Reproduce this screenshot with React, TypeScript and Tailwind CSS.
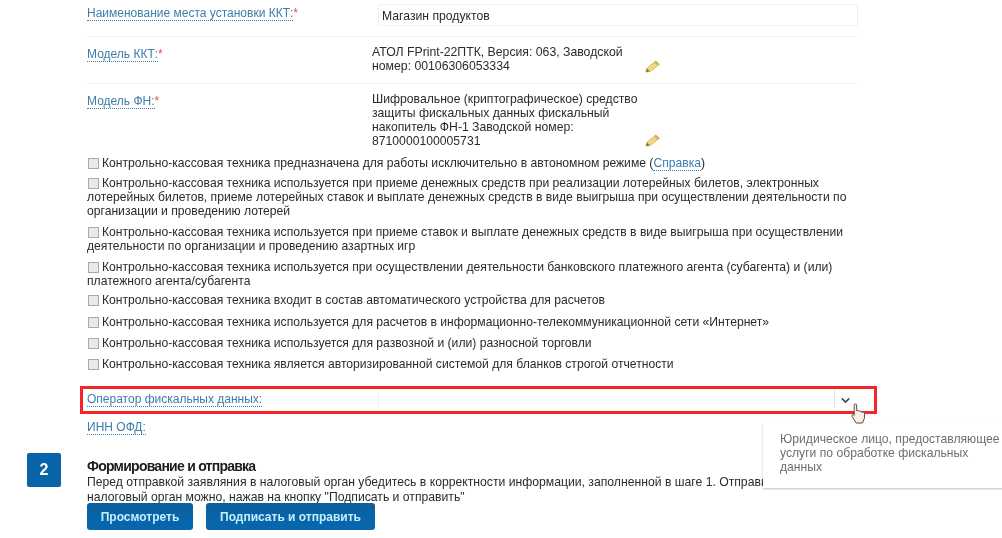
import { ChevronDown } from 'lucide-react';

const checks = [
    { cls: '-mt-px', text: 'Контрольно-кассовая техника используется при приеме денежных средств при реализации лотерейных билетов, электронных лотерейных билетов, приеме лотерейных ставок и выплате денежных средств в виде выигрыша при осуществлении деятельности по организации и проведению лотерей' },
    { cls: '', text: 'Контрольно-кассовая техника используется при приеме ставок и выплате денежных средств в виде выигрыша при осуществлении деятельности по организации и проведению азартных игр' },
    { cls: '', text: 'Контрольно-кассовая техника используется при осуществлении деятельности банковского платежного агента (субагента) и (или) платежного агента/субагента' },
    { cls: '-mt-[2px]', text: 'Контрольно-кассовая техника входит в состав автоматического устройства для расчетов' },
    { cls: 'mt-px', text: 'Контрольно-кассовая техника используется для расчетов в информационно-телекоммуникационной сети «Интернет»' },
    { cls: '', text: 'Контрольно-кассовая техника используется для развозной и (или) разносной торговли' },
    { cls: '', text: 'Контрольно-кассовая техника является авторизированной системой для бланков строгой отчетности' },
];

function Pencil() {
    return (
        <svg width="15" height="13" viewBox="0 0 16 14" className="shrink-0">
            <path d="M1 13 L2 9 L11.5 1 L15.5 4.5 L5.5 12.5 Z" fill="#f2d67c" stroke="#c9ad5a" strokeWidth="0.8" />
            <path d="M1 13 L2 9.5 L5 12 Z" fill="#7a6a45" />
            <path d="M11.5 1 L15.5 4.5 L13.5 6 L9.8 2.6 Z" fill="#dba85a" />
        </svg>
    );
}

function HandCursor() {
    return (
        <svg width="15" height="21" viewBox="0 0 15 21" className="absolute left-[851px] top-[403px]">
            <path
                d="M3.2 2 C3.2 0.6 5.6 0.6 5.6 2 L5.8 8 C6.6 7.2 8 7.4 8.3 8.4 C9.2 7.8 10.4 8.2 10.6 9.2 C11.6 8.8 13.4 9.2 13.6 10.6 L13.4 15.4 L11.4 20 L5.2 20 L1 13.4 C0.4 12.2 1.6 11 3.2 12.2 Z"
                fill="#fbeee4"
                stroke="#5a4a42"
                strokeWidth="1"
                strokeLinejoin="round"
            />
        </svg>
    );
}

function FieldLabel({ text, required }: { text: string; required?: boolean }) {
    return (
        <div className="w-[285px] shrink-0 text-[#3f7dab]">
            <span className="border-b border-dotted border-[#3f7dab]">{text}:</span>
            {required && <span className="text-[#d9534f]">*</span>}
        </div>
    );
}

function Check({ children, className }: { children: React.ReactNode; className?: string }) {
    return (
        <div className={`pr-[145px] text-[12.15px] leading-[14px] text-[#2b2b2b] ${className ?? ''}`}>
            <span className="ml-px mr-[3px] inline-block h-[11px] w-[11px] translate-y-[2px] border border-[#a9a9a9] bg-[#e9e9e9]" />
            {children}
        </div>
    );
}

export default function App() {
    return (
        <div className="relative h-[538px] w-[1002px] overflow-hidden bg-white font-['Liberation_Sans',Arial,sans-serif] text-[12px] text-[#2b2b2b] blur-[0.4px]">
            <div className="pl-[87px]">
                <div className="flex h-[37px] w-[771px] items-start border-b border-[#f4f4f4] pt-[4px]">
                    <FieldLabel text="Наименование места установки ККТ" required />
                    <div className="ml-[6px] flex h-[22px] flex-1 items-center rounded-[2px] border border-[#f0f0f0] pl-[3px] pt-[2px] text-[12.2px]">Магазин продуктов</div>
                </div>

                <div className="flex h-[47px] w-[771px] items-start border-b border-[#f4f4f4] pt-[8px]">
                    <FieldLabel text="Модель ККТ" required />
                    <div className="relative w-[262px] text-[12.25px] leading-[14px]">
                        АТОЛ FPrint-22ПТК, Версия: 063, Заводской номер: 00106306053334
                        <span className="absolute left-[273px] top-[15px]"><Pencil /></span>
                    </div>
                </div>

                <div className="flex h-[72px] w-[771px] items-start pt-[8px]">
                    <FieldLabel text="Модель ФН" required />
                    <div className="relative w-[268px] text-[12.2px] leading-[14px]">
                        Шифровальное (криптографическое) средство защиты фискальных данных фискальный накопитель ФН-1 Заводской номер: 8710000100005731
                        <span className="absolute left-[273px] top-[42px]"><Pencil /></span>
                    </div>
                </div>

                <div className="flex w-[915px] flex-col gap-[7px]">
                    <Check>
                        Контрольно-кассовая техника предназначена для работы исключительно в автономном режиме (
                        <span className="border-b border-dotted border-[#3f7dab] text-[#3f7dab]">Справка</span>)
                    </Check>
                    {checks.map((item) => (
                        <Check key={item.text} className={item.cls}>{item.text}</Check>
                    ))}
                </div>
            </div>

            <div className="ml-[80px] mt-[15px] flex h-[28px] w-[797px] items-center border-[3px] border-[#f5252b] pb-[3px] pl-[4px]">
                <div className="w-[291px] shrink-0 text-[#3f7dab]">
                    <span className="border-b border-dotted border-[#3f7dab]">Оператор фискальных данных:</span>
                </div>
                <div className="flex h-[18px] w-[477px] items-center justify-end border-l border-[#f0f0f0]">
                    <div className="flex h-[18px] w-[21px] items-center justify-center border-l border-[#e4e4e4] pt-[3px]">
                        <ChevronDown size={13} strokeWidth={3} className="text-[#34506f]" />
                    </div>
                </div>
            </div>

            <div className="ml-[87px] mt-[4px] text-[#3f7dab]">
                <span className="border-b border-dotted border-[#3f7dab]">ИНН ОФД:</span>
            </div>

            <div className="mt-[17px] flex">
                <div className="ml-[27px] flex h-[34px] w-[34px] items-center justify-center rounded-[2px] bg-[#0a64a8] text-[16px] font-bold text-white">2</div>
                <div className="ml-[26px] pt-[5px]">
                    <div className="text-[14px] font-bold leading-[17px] tracking-[-0.75px] text-[#1c1c1c]">Формирование и отправка</div>
                    <div className="whitespace-nowrap text-[12.2px] leading-[15px]">
                        Перед отправкой заявляния в налоговый орган убедитесь в корректности информации, заполненной в шаге 1. Отправить
                        <br />
                        налоговый орган можно, нажав на кнопку "Подписать и отправить"
                    </div>
                    <div className="-mt-[2px] flex gap-[13px]">
                        <button className="h-[27px] w-[106px] rounded-[3px] bg-gradient-to-b from-[#0b5f9f] to-[#0668ae] text-[12px] font-bold text-[#c4efff]">Просмотреть</button>
                        <button className="h-[27px] w-[169px] rounded-[3px] bg-gradient-to-b from-[#0b5f9f] to-[#0668ae] text-[12px] font-bold text-[#c4efff]">Подписать и отправить</button>
                    </div>
                </div>
            </div>

            <div className="absolute left-[763px] top-[423px] h-[65px] w-[245px] bg-white pl-[17px] pt-[9px] text-[12.15px] leading-[14px] text-[#6f6f6f] shadow-[0_1px_2px_rgba(0,0,0,0.25)]">
                Юридическое лицо, предоставляющее услуги по обработке фискальных данных
            </div>

            <HandCursor />
        </div>
    );
}
